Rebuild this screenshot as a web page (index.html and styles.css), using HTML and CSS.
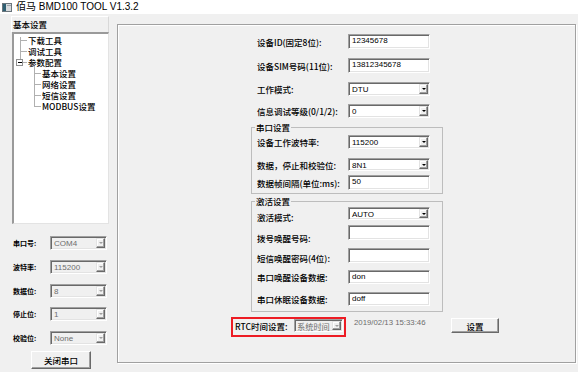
FILE: index.html
```html
<!DOCTYPE html>
<html lang="zh-CN">
<head>
<meta charset="utf-8">
<title>佰马 BMD100 TOOL V1.3.2</title>
<link rel="stylesheet" href="styles.css">
</head>
<body>
<header class="titlebar">
  <svg class="appicon" width="10" height="9" viewBox="0 0 10 9">
    <rect x="0.5" y="0.5" width="9" height="8" fill="#d6dadd" stroke="#6b757c"/>
    <rect x="1" y="1" width="3" height="7" fill="#2e5f72"/>
    <rect x="5" y="2" width="4" height="1" fill="#9aa3a8"/>
  </svg>
  <span class="title">佰马 BMD100 TOOL V1.3.2</span>
</header>
<div class="main">
  <aside class="side">
    <div class="side-hdr">基本设置</div>
    <div class="tree">
      <svg class="tree-lines" width="40" height="80" viewBox="0 0 40 80">
        <g stroke="#b0b0b0" stroke-width="1" fill="none" shape-rendering="crispEdges">
          <path d="M6.5 3V25M6.5 6.5H13M6.5 17.5H13M8.5 28.5H13M20.5 32V72.5M20.5 39.5H27M20.5 50.5H27M20.5 61.5H27M20.5 72.5H27"/>
          <rect x="2.5" y="25.5" width="6" height="6" fill="#fff" stroke="#909090"/>
          <path d="M4 28.5H7.5" stroke="#000"/>
        </g>
      </svg>
      <div class="node l1">下载工具</div>
      <div class="node l1">调试工具</div>
      <div class="node l1">参数配置</div>
      <div class="node l2 sel">基本设置</div>
      <div class="node l2">网络设置</div>
      <div class="node l2">短信设置</div>
      <div class="node l2">MODBUS设置</div>
    </div>
    <div class="serial">
      <span class="slbl">串口号:</span><div class="combo dis"><span class="val">COM4</span><i class="arr"></i></div>
      <span class="slbl">波特率:</span><div class="combo dis"><span class="val">115200</span><i class="arr"></i></div>
      <span class="slbl">数据位:</span><div class="combo dis"><span class="val">8</span><i class="arr"></i></div>
      <span class="slbl">停止位:</span><div class="combo dis"><span class="val">1</span><i class="arr"></i></div>
      <span class="slbl">校验位:</span><div class="combo dis"><span class="val">None</span><i class="arr"></i></div>
    </div>
    <button class="btn close-port">关闭串口</button>
  </aside>
  <section class="panel">
    <div class="form">
      <div class="row top"><span class="lbl">设备ID(固定8位):</span><div class="edit h15">12345678</div></div>
      <div class="row top mt9"><span class="lbl">设备SIM号码(11位):</span><div class="edit h15">13812345678</div></div>
      <div class="row top mt9"><span class="lbl">工作模式:</span><div class="combo"><span class="val">DTU</span><i class="arr"></i></div></div>
      <div class="row top mt8"><span class="lbl">信息调试等级(0/1/2):</span><div class="combo"><span class="val">0</span><i class="arr"></i></div></div>

      <fieldset class="grp g1">
        <legend>串口设置</legend>
        <div class="row mt2"><span class="lbl">设备工作波特率:</span><div class="combo"><span class="val">115200</span><i class="arr"></i></div></div>
        <div class="row mt9"><span class="lbl">数据，停止和校验位:</span><div class="combo h13"><span class="val">8N1</span><i class="arr"></i></div></div>
        <div class="row mt4"><span class="lbl">数据帧间隔(单位:ms):</span><div class="edit h15">50</div></div>
      </fieldset>

      <fieldset class="grp g2">
        <legend>激活设置</legend>
        <div class="row"><span class="lbl dn3">激活模式:</span><div class="combo h13"><span class="val">AUTO</span><i class="arr"></i></div></div>
        <div class="row mt5"><span class="lbl dn5">拨号唤醒号码:</span><div class="edit h15"></div></div>
        <div class="row mt8"><span class="lbl dn2">短信唤醒密码(4位):</span><div class="edit h15"></div></div>
        <div class="row mt7"><span class="lbl">串口唤醒设备数据:</span><div class="edit h14">don</div></div>
        <div class="row mt8"><span class="lbl">串口休眠设备数据:</span><div class="edit h14">doff</div></div>
      </fieldset>

      <div class="rtc">
        <div class="rtc-box">
          <span class="rtc-lbl">RTC时间设置:</span>
          <div class="combo dis small"><span class="val cjk">系统时间</span><i class="arr"></i></div>
        </div>
        <span class="date">2019/02/13 15:33:46</span>
        <button class="btn set">设置</button>
      </div>
    </div>
  </section>
</div>
</body>
</html>
```

FILE: styles.css
```css
* { box-sizing: border-box; }
html, body { margin: 0; padding: 0; }
body {
  width: 578px;
  height: 372px;
  overflow: hidden;
  background: #f0f0f0;
  font-family: "Noto Sans CJK SC", "Liberation Sans", sans-serif;
  font-size: 8.5px;
  font-weight: 500;
  color: #000;
}

/* title bar */
.titlebar {
  height: 14px;
  background: #fff;
  display: flex;
  align-items: center;
  padding-left: 2px;
}
.appicon { margin-right: 4px; flex: none; }
.title {
  font-family: "Liberation Sans", "Noto Sans CJK SC", sans-serif;
  font-size: 10px;
  font-weight: 400;
  line-height: 14px;
  white-space: nowrap;
}

.main { display: flex; align-items: flex-start; }

/* left side */
.side {
  width: 98px;
  margin-left: 11px;
  margin-top: 2px;
  display: flex;
  flex-direction: column;
}
.side-hdr {
  height: 16px;
  border-top: 1px solid #fff;
  border-left: 1px solid #fff;
  border-right: 1px solid #d8d8d8;
  padding-left: 1px;
  line-height: 14px;
  white-space: nowrap;
}
.tree {
  position: relative;
  height: 192px;
  margin-left: 1px;
  background: #fff;
  border-style: solid;
  border-width: 2px 1px 1px 2px;
  border-color: #9a9a9a #e3e3e3 #e3e3e3 #9a9a9a;
  padding-top: 1px;
}
.tree-lines { position: absolute; left: 0; top: 0; }
.node { height: 11px; line-height: 11px; white-space: nowrap; }
.node.l1 { padding-left: 14px; }
.node.l2 { padding-left: 28px; }

.serial {
  display: grid;
  grid-template-columns: 37px 57px;
  grid-auto-rows: 14px;
  row-gap: 9.75px;
  align-items: center;
  margin-top: 12px;
  padding-left: 2px;
}
.slbl { font-size: 7px; font-weight: 700; white-space: nowrap; line-height: 10px; }

/* combos / edits */
.combo, .edit {
  width: 82px;
  height: 14px;
  background: #fff;
  border: 1px solid;
  border-color: #a0a0a0 #fff #fff #a0a0a0;
  box-shadow: inset 1px 1px 0 #696969, inset -1px -1px 0 #e3e3e3;
  font-family: "Liberation Sans", sans-serif;
  font-size: 8px;
  font-weight: 400;
}
.combo { display: flex; align-items: stretch; padding: 1px; }
.edit { padding-left: 3px; line-height: 11px; white-space: nowrap; }
.h13 { height: 13px; }
.h14 { height: 14px; }
.h15 { height: 15px; }
.val { flex: 1; padding-left: 2px; line-height: 11px; white-space: nowrap; overflow: hidden; }
.arr {
  width: 9px;
  flex: none;
  background: #f0f0f0;
  border: 1px solid;
  border-color: #e3e3e3 #696969 #696969 #e3e3e3;
  box-shadow: inset -1px -1px 0 #a0a0a0, inset 1px 1px 0 #fff;
  display: flex;
  align-items: center;
  justify-content: center;
}
.arr::after {
  content: "";
  border-left: 2px solid transparent;
  border-right: 2px solid transparent;
  border-top: 2px solid #000;
}
.combo.dis { width: 57px; background: #f0f0f0; }
.combo.dis .val { color: #6d6d6d; }
.combo.dis .arr::after { border-top-color: #a0a0a0; }
.combo.small { width: 49px; height: 13px; }
.val.cjk {
  font-family: "Noto Sans CJK SC", sans-serif;
  font-size: 8.2px;
  color: #8a8a8a;
  padding-left: 1px;
  overflow: visible;
}

/* buttons */
.btn {
  background: #f0f0f0;
  border: 1px solid;
  border-color: #fff #696969 #696969 #fff;
  box-shadow: inset -1px -1px 0 #a0a0a0;
  font-family: "Noto Sans CJK SC", sans-serif;
  font-size: 8.5px;
  font-weight: 500;
  padding: 0;
  color: #000;
}
.close-port { width: 60px; height: 18px; margin-top: 6px; margin-left: 20px; }

/* right panel */
.panel {
  width: 459px;
  height: 339px;
  margin-left: 8px;
  margin-top: 10px;
  border: 1px solid #a0a0a0;
  box-shadow: inset 1px 1px 0 #fff, 1px 1px 0 #fff;
  padding: 9px 0 0 113px;
}
.form { display: flex; flex-direction: column; align-items: flex-start; }
.row { display: flex; align-items: center; }
.row.top { padding-left: 26px; }
.grp .row { padding-left: 5px; }
.lbl { width: 91px; white-space: nowrap; line-height: 12px; }
.dn2 { margin: 2px 0 -2px; }
.dn3 { margin: 3px 0 -3px; }
.dn5 { margin: 5px 0 -5px; }

.mt2 { margin-top: 2px; }
.mt4 { margin-top: 4px; }
.mt5 { margin-top: 5px; }
.mt7 { margin-top: 7px; }
.mt8 { margin-top: 8px; }
.mt9 { margin-top: 9px; }

.grp {
  width: 192px;
  margin: 0 0 0 20px;
  padding: 0 0 3px 0;
  border: 1px solid #bdbdbd;
  min-width: 0;
}
.grp legend {
  margin-left: 3px;
  padding: 0 1px;
  line-height: 11px;
  height: 11px;
}
.g1 { margin-top: 4px; }
.g2 { margin-top: 2px; padding-bottom: 5px; }

.rtc { display: flex; align-items: flex-start; margin-top: 5px; }
.rtc-box {
  width: 115px;
  height: 20px;
  border: 2px solid #ed1c24;
  padding: 0 1px 3px 2px;
  display: flex;
  align-items: center;
  justify-content: space-between;
}
.rtc-lbl { white-space: nowrap; line-height: 12px; }
.date {
  width: 97px;
  margin-left: 8px;
  font-family: "Liberation Sans", sans-serif;
  font-size: 7.8px;
  font-weight: 400;
  color: #6d6d6d;
  line-height: 11px;
  white-space: nowrap;
}
.set { width: 48px; height: 15px; margin-top: 1px; }
```
